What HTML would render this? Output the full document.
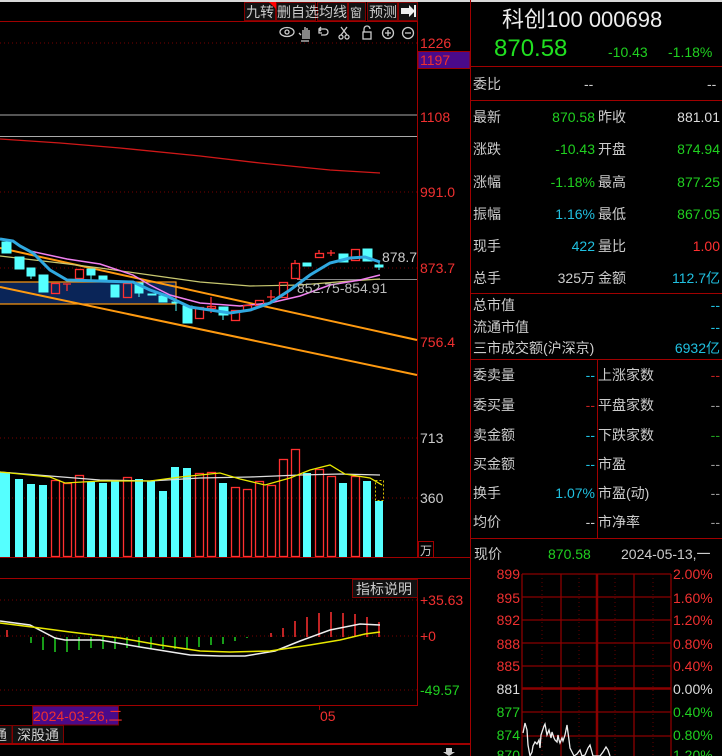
<!DOCTYPE html>
<html><head><meta charset="utf-8"><style>
body{margin:0;background:#000;width:722px;height:756px;overflow:hidden}
svg{display:block}
text{font-family:"Liberation Sans","Noto Sans CJK SC",sans-serif}
</style></head><body>
<svg width="722" height="756" viewBox="0 0 722 756" xmlns="http://www.w3.org/2000/svg">
<rect width="722" height="756" fill="#000"/>
<rect x="0" y="0" width="722" height="2" fill="#d8d8d8"/>
<g stroke="#800000" fill="#111">
<rect x="244.5" y="2.5" width="31" height="18"/><rect x="276.5" y="2.5" width="39" height="18"/><rect x="317.5" y="2.5" width="30" height="18"/><rect x="348.5" y="2.5" width="17" height="18"/><rect x="367.5" y="2.5" width="30" height="18"/><rect x="398.5" y="2.5" width="19" height="18"/>
</g>
<polygon points="269,2 276,2 276,9" fill="#f00"/>
<g fill="#ccc" font-size="14"><text x="246" y="17">九转</text><text x="277" y="17">删自选</text><text x="319" y="17">均线</text><text x="350" y="17" font-size="12">窗</text><text x="369" y="17">预测</text></g>
<path d="M401 8h8v-3l6 6-6 6v-3h-8z" fill="#eee"/><rect x="414" y="5" width="2" height="12" fill="#eee"/>
<line x1="0" y1="21.5" x2="418" y2="21.5" stroke="#a00000"/>
<g stroke="#ccc" fill="none" stroke-width="1.3">
<ellipse cx="287" cy="32" rx="7" ry="4.5"/><circle cx="287" cy="32" r="2"/>
<path d="M303 39v-9m2 9v-12m2 12v-11m2 11v-9m-8 5l-2-2m2 8h8"/>
<path d="M322 29h-3v4h3m-3-4l2-2m-2 2l2 2m1-2h3a3 3 0 010 6h-4"/>
<path d="M341 27l6 8m0-8l-6 8"/><circle cx="341" cy="37" r="2"/><circle cx="347" cy="37" r="2"/>
<rect x="363" y="32" width="8" height="7"/><path d="M364 32v-3a3 3 0 016 0"/>
<circle cx="388" cy="33" r="5.5"/><path d="M385 33h6m-3-3v6"/>
<circle cx="408" cy="33" r="5.5"/><path d="M405 33h6"/>
</g>
<line x1="417.5" y1="21" x2="417.5" y2="558" stroke="#a00000"/>
<g stroke="#700" stroke-dasharray="1 3"><line x1="0" y1="43" x2="417" y2="43"/><line x1="0" y1="192" x2="417" y2="192"/><line x1="0" y1="268" x2="417" y2="268"/><line x1="0" y1="438" x2="417" y2="438"/><line x1="0" y1="498" x2="417" y2="498"/><line x1="0" y1="600" x2="417" y2="600"/><line x1="0" y1="636" x2="417" y2="636"/><line x1="0" y1="690" x2="417" y2="690"/></g>
<g fill="#f03030" font-size="14"><text x="420" y="48">1226</text><text x="420" y="122">1108</text><text x="420" y="197">991.0</text><text x="420" y="273">873.7</text><text x="420" y="347">756.4</text></g>
<rect x="418" y="51.5" width="52" height="17" fill="#4a0a8a" stroke="#a00000"/>
<text x="420" y="65" fill="#f03030" font-size="14">1197</text>
<line x1="0" y1="115" x2="417" y2="115" stroke="#aaa"/>
<line x1="0" y1="136.5" x2="417" y2="136.5" stroke="#aaa"/>
<polyline points="0,139 60,143 120,148 200,156 260,163 330,170 380,173" fill="none" stroke="#d01818" stroke-width="1.3"/>
<rect x="-1" y="282" width="177" height="22" fill="#0a2558" stroke="#ff9a10" stroke-width="1.2"/>
<line x1="0" y1="248" x2="417" y2="340" stroke="#ff9a10" stroke-width="2"/>
<line x1="0" y1="287" x2="417" y2="375" stroke="#ff9a10" stroke-width="2"/>
<line x1="297" y1="279.5" x2="417" y2="279.5" stroke="#888"/>
<polyline points="0,256 60,263 100,268 150,275 200,282 250,286 300,285 350,281 380,279" fill="none" stroke="#c8c870" stroke-width="1.2"/>
<polyline points="30,251 67,259 100,264 133,275 150,285 170,295 200,303 240,306 270,303 300,296 330,285 360,280 380,275" fill="none" stroke="#f080f0" stroke-width="1.5"/>
<g fill="#55ffff" stroke="#55ffff">
<rect x="2" y="242" width="9" height="11"/><rect x="15" y="257" width="9" height="12"/><rect x="27" y="268" width="8" height="8"/><line x1="31" y1="276" x2="31" y2="279"/>
<rect x="39" y="275" width="9" height="17"/><rect x="87" y="269" width="8" height="6"/><line x1="91" y1="275" x2="91" y2="281"/>
<rect x="99" y="276" width="8" height="4"/><rect x="111" y="285" width="8" height="12"/><rect x="135" y="283" width="8" height="10"/><line x1="139" y1="293" x2="139" y2="297"/>
<rect x="148" y="294" width="8" height="1"/><rect x="159" y="296" width="8" height="6"/><rect x="172" y="302" width="8" height="1"/><line x1="176" y1="302" x2="176" y2="311"/>
<rect x="183" y="306" width="9" height="17"/><rect x="219" y="307" width="9" height="8"/><line x1="223" y1="315" x2="223" y2="320"/>
<rect x="303" y="263" width="8" height="3"/><rect x="339" y="254" width="9" height="8"/><rect x="363" y="249" width="9" height="12"/><rect x="375" y="265" width="8" height="2"/><line x1="379" y1="261" x2="379" y2="270"/>
</g>
<g fill="none" stroke="#ff3030" stroke-width="1.3">
<rect x="51.5" y="283.5" width="8" height="10"/><line x1="67" y1="284" x2="67" y2="291"/><line x1="63" y1="284" x2="71" y2="284"/>
<rect x="75.5" y="269.5" width="8" height="9"/><rect x="123.5" y="283.5" width="8" height="14"/>
<rect x="195.5" y="307.5" width="8" height="11"/><line x1="211" y1="297" x2="211" y2="313"/><rect x="207.5" y="306.5" width="8" height="2"/>
<rect x="231.5" y="310.5" width="8" height="10"/><rect x="243.5" y="305.5" width="8" height="5"/><rect x="255.5" y="300.5" width="8" height="5"/>
<line x1="271" y1="290" x2="271" y2="302"/><line x1="267" y1="297" x2="275" y2="297"/>
<rect x="279.5" y="282.5" width="8" height="15"/><rect x="291.5" y="263.5" width="8" height="15"/><line x1="295" y1="260" x2="295" y2="263"/>
<rect x="315.5" y="253.5" width="8" height="4"/><line x1="319" y1="250" x2="319" y2="253"/><line x1="327" y1="253" x2="335" y2="253"/><line x1="331" y1="250" x2="331" y2="256"/>
<rect x="351.5" y="249.5" width="8" height="11"/>
</g>
<polyline points="0,239 13,241 20,246 33,253 50,270 67,280 100,281 133,282 150,290 167,296 175,300 190,307 210,310 230,313 250,310 270,303 290,290 310,275 330,263 350,258 365,257 380,262" fill="none" stroke="#30a8e0" stroke-width="3"/>
<text x="382" y="262" fill="#ccc" font-size="14">878.7</text>
<text x="297" y="293" fill="#bbb" font-size="14">852.75-854.91</text>
<g stroke="#ff3030" fill="none" stroke-width="1.3">
<rect x="51.5" y="480.5" width="8" height="76"/><rect x="63.5" y="483.5" width="8" height="73"/><rect x="75.5" y="475.5" width="8" height="81"/>
<rect x="123.5" y="477.5" width="8" height="79"/><rect x="195.5" y="473.5" width="8" height="83"/><rect x="207.5" y="472.5" width="8" height="84"/>
<rect x="231.5" y="487.5" width="8" height="69"/><rect x="243.5" y="489.5" width="8" height="67"/><rect x="255.5" y="481.5" width="8" height="75"/><rect x="267.5" y="485.5" width="8" height="71"/>
<rect x="279.5" y="459.5" width="8" height="97"/><rect x="291.5" y="449.5" width="8" height="107"/><rect x="315.5" y="469.5" width="8" height="87"/><rect x="327.5" y="476.5" width="8" height="80"/><rect x="351.5" y="476.5" width="8" height="80"/>
</g>
<g fill="#55ffff">
<rect x="0" y="472" width="10" height="85"/><rect x="15" y="479" width="8" height="78"/><rect x="27" y="484" width="8" height="73"/><rect x="39" y="485" width="8" height="72"/>
<rect x="87" y="482" width="8" height="75"/><rect x="99" y="483" width="8" height="74"/><rect x="111" y="481" width="8" height="76"/><rect x="135" y="479" width="8" height="78"/>
<rect x="147" y="481" width="8" height="76"/><rect x="159" y="491" width="8" height="66"/><rect x="171" y="467" width="8" height="90"/><rect x="183" y="468" width="8" height="89"/>
<rect x="219" y="483" width="8" height="74"/><rect x="303" y="473" width="8" height="84"/><rect x="339" y="483" width="8" height="74"/><rect x="363" y="481" width="8" height="76"/><rect x="375" y="501" width="8" height="56"/>
</g>
<rect x="375.5" y="480.5" width="8" height="20" fill="none" stroke="#d8c000" stroke-dasharray="2 2"/>
<polyline points="0,472 50,476 100,480 150,481 200,478 250,477 300,475 340,474 380,475" fill="none" stroke="#ddd" stroke-width="1.3"/>
<polyline points="0,472 50,477 65,483 100,481 150,481 180,477 220,473 240,479 265,485 290,478 310,470 330,465 345,474 370,478 382,485" fill="none" stroke="#e8e800" stroke-width="1.3"/>
<g fill="#ccc" font-size="14"><text x="420" y="443">713</text><text x="420" y="503">360</text></g>
<rect x="418.5" y="541.5" width="15" height="16" fill="none" stroke="#a00000"/><text x="420" y="555" fill="#ccc" font-size="12">万</text>
<line x1="0" y1="557.5" x2="470" y2="557.5" stroke="#a00000"/>
<line x1="0" y1="578.5" x2="470" y2="578.5" stroke="#a00000"/>
<line x1="417.5" y1="578" x2="417.5" y2="706" stroke="#a00000"/>
<line x1="0" y1="705.5" x2="418" y2="705.5" stroke="#a00000"/>
<rect x="352.5" y="579.5" width="65" height="18" fill="#111" stroke="#800000"/>
<text x="356" y="594" fill="#ccc" font-size="14">指标说明</text>
<g font-size="14"><text x="420" y="605" fill="#f03030">+35.63</text><text x="420" y="641" fill="#f03030">+0</text><text x="420" y="695" fill="#20d020">-49.57</text></g>
<g stroke="#20d020" stroke-width="1.5">
<line x1="31" y1="637" x2="31" y2="643"/><line x1="43" y1="637" x2="43" y2="650"/><line x1="55" y1="637" x2="55" y2="652"/><line x1="67" y1="637" x2="67" y2="652"/><line x1="79" y1="637" x2="79" y2="650"/><line x1="91" y1="637" x2="91" y2="648"/><line x1="103" y1="637" x2="103" y2="649"/><line x1="115" y1="637" x2="115" y2="649"/><line x1="127" y1="637" x2="127" y2="648"/><line x1="139" y1="637" x2="139" y2="647"/><line x1="151" y1="637" x2="151" y2="648"/><line x1="163" y1="637" x2="163" y2="649"/><line x1="175" y1="637" x2="175" y2="649"/><line x1="187" y1="637" x2="187" y2="649"/><line x1="199" y1="637" x2="199" y2="647"/><line x1="211" y1="637" x2="211" y2="645"/><line x1="223" y1="637" x2="223" y2="644"/><line x1="235" y1="637" x2="235" y2="641"/><line x1="247" y1="637" x2="247" y2="638"/>
</g>
<g stroke="#ff3030" stroke-width="1.5">
<line x1="7" y1="630" x2="7" y2="637"/><line x1="271" y1="633" x2="271" y2="637"/><line x1="283" y1="628" x2="283" y2="637"/><line x1="295" y1="621" x2="295" y2="637"/><line x1="307" y1="617" x2="307" y2="637"/><line x1="319" y1="613" x2="319" y2="637"/><line x1="331" y1="612" x2="331" y2="637"/><line x1="343" y1="613" x2="343" y2="637"/><line x1="355" y1="614" x2="355" y2="637"/><line x1="367" y1="617" x2="367" y2="637"/><line x1="379" y1="622" x2="379" y2="637"/>
</g>
<polyline points="0,621 30,625 55,638 65,640 100,640 140,647 190,655 220,656 245,656 275,651 300,641 330,630 360,624 380,625" fill="none" stroke="#eee" stroke-width="1.5"/>
<polyline points="0,623 40,628 70,632 120,638 160,645 200,651 230,652 270,651 310,645 340,640 365,634 380,632" fill="none" stroke="#e8e800" stroke-width="1.5"/>
<rect x="32.5" y="706" width="86" height="19" fill="#4a0a8a" stroke="#800000"/>
<text x="33" y="721" fill="#f03030" font-size="14">2024-03-26,二</text>
<line x1="319.5" y1="706" x2="319.5" y2="710" stroke="#a00000"/>
<text x="320" y="721" fill="#f03030" font-size="14">05</text>
<rect x="-1" y="725.5" width="13" height="18" fill="#111" stroke="#800000"/><rect x="12.5" y="725.5" width="51" height="18" fill="#111" stroke="#800000"/>
<text x="-7" y="740" fill="#ccc" font-size="14">通</text><text x="17" y="740" fill="#ccc" font-size="14">深股通</text>
<rect x="0" y="743" width="470" height="2" fill="#a00000"/>
<path d="M446 748h6v4h3l-6 4-6-4h3z" fill="#ccc"/>
<line x1="470.5" y1="0" x2="470.5" y2="756" stroke="#a00000"/>
<text x="502" y="27" fill="#eee" font-size="22">科创100 000698</text>
<text x="494" y="56" fill="#20e020" font-size="24">870.58</text>
<text x="608" y="57" fill="#20d020" font-size="14">-10.43</text><text x="668" y="57" fill="#20d020" font-size="14">-1.18%</text>
<line x1="470" y1="66.5" x2="722" y2="66.5" stroke="#a00000"/>
<text x="473" y="89" fill="#ccc" font-size="14">委比</text><text x="584" y="89" fill="#ccc" font-size="14">--</text><text x="707" y="89" fill="#ccc" font-size="14">--</text>
<line x1="470" y1="100.5" x2="722" y2="100.5" stroke="#a00000"/>
<g font-size="14" fill="#ccc">
<text x="473" y="122">最新</text><text x="598" y="122">昨收</text>
<text x="473" y="154">涨跌</text><text x="598" y="154">开盘</text>
<text x="473" y="187">涨幅</text><text x="598" y="187">最高</text>
<text x="473" y="219">振幅</text><text x="598" y="219">最低</text>
<text x="473" y="251">现手</text><text x="598" y="251">量比</text>
<text x="473" y="283">总手</text><text x="598" y="283">金额</text>
</g>
<g font-size="14" text-anchor="end">
<text x="595" y="122" fill="#20d020">870.58</text><text x="720" y="122" fill="#ddd">881.01</text>
<text x="595" y="154" fill="#20d020">-10.43</text><text x="720" y="154" fill="#20d020">874.94</text>
<text x="595" y="187" fill="#20d020">-1.18%</text><text x="720" y="187" fill="#20d020">877.25</text>
<text x="595" y="219" fill="#20c0e0">1.16%</text><text x="720" y="219" fill="#20d020">867.05</text>
<text x="595" y="251" fill="#20c0e0">422</text><text x="720" y="251" fill="#ff3030">1.00</text>
<text x="595" y="283" fill="#ccc">325万</text><text x="720" y="283" fill="#20c0e0">112.7亿</text>
</g>
<line x1="470" y1="293.5" x2="722" y2="293.5" stroke="#a00000"/>
<g font-size="14" fill="#ccc"><text x="473" y="310">总市值</text><text x="473" y="332">流通市值</text><text x="473" y="353">三市成交额(沪深京)</text></g>
<text x="720" y="310" fill="#20c0e0" font-size="14" text-anchor="end">--</text><text x="720" y="332" fill="#20c0e0" font-size="14" text-anchor="end">--</text><text x="720" y="353" fill="#20c0e0" font-size="14" text-anchor="end">6932亿</text>
<line x1="470" y1="359.5" x2="722" y2="359.5" stroke="#a00000"/>
<line x1="597.5" y1="359" x2="597.5" y2="538" stroke="#a00000"/>
<g font-size="14" fill="#ccc">
<text x="473" y="380">委卖量</text><text x="598" y="380">上涨家数</text>
<text x="473" y="410">委买量</text><text x="598" y="410">平盘家数</text>
<text x="473" y="440">卖金额</text><text x="598" y="440">下跌家数</text>
<text x="473" y="469">买金额</text><text x="598" y="469">市盈</text>
<text x="473" y="498">换手</text><text x="598" y="498">市盈(动)</text>
<text x="473" y="527">均价</text><text x="598" y="527">市净率</text>
</g>
<g font-size="14" text-anchor="end">
<text x="595" y="380" fill="#20c0e0">--</text><text x="720" y="380" fill="#c02020">--</text>
<text x="595" y="410" fill="#c02020">--</text><text x="720" y="410" fill="#999">--</text>
<text x="595" y="440" fill="#20c0e0">--</text><text x="720" y="440" fill="#20a020">--</text>
<text x="595" y="469" fill="#20c0e0">--</text><text x="720" y="469" fill="#999">--</text>
<text x="595" y="498" fill="#20c0e0">1.07%</text><text x="720" y="498" fill="#999">--</text>
<text x="595" y="527" fill="#ccc">--</text><text x="720" y="527" fill="#999">--</text>
</g>
<line x1="470" y1="538.5" x2="722" y2="538.5" stroke="#a00000"/>
<text x="474" y="559" fill="#ccc" font-size="14">现价</text><text x="548" y="559" fill="#20d020" font-size="14">870.58</text><text x="621" y="559" fill="#ccc" font-size="14">2024-05-13,一</text>
<g stroke="#8a0000" stroke-width="1.3">
<line x1="522" y1="574" x2="671" y2="574"/><line x1="522" y1="597" x2="671" y2="597"/><line x1="522" y1="620" x2="671" y2="620"/><line x1="522" y1="643" x2="671" y2="643"/><line x1="522" y1="666" x2="671" y2="666"/><line x1="522" y1="712" x2="671" y2="712"/><line x1="522" y1="736" x2="671" y2="736"/>
<line x1="522" y1="574" x2="522" y2="756"/><line x1="561" y1="574" x2="561" y2="756"/><line x1="634" y1="574" x2="634" y2="756"/><line x1="671" y1="574" x2="671" y2="756"/>
</g>
<line x1="597" y1="574" x2="597" y2="756" stroke="#8a0000" stroke-width="2.5"/>
<line x1="522" y1="688.5" x2="671" y2="688.5" stroke="#8a0000" stroke-width="2.5"/>
<g stroke="#600" stroke-dasharray="1 3"><line x1="542" y1="574" x2="542" y2="756"/><line x1="579" y1="574" x2="579" y2="756"/><line x1="615" y1="574" x2="615" y2="756"/><line x1="653" y1="574" x2="653" y2="756"/></g>
<g font-size="14" text-anchor="end">
<text x="520" y="579" fill="#f03030">899</text><text x="520" y="603" fill="#f03030">895</text><text x="520" y="625" fill="#f03030">892</text><text x="520" y="649" fill="#f03030">888</text><text x="520" y="671" fill="#f03030">885</text><text x="520" y="694" fill="#ddd">881</text><text x="520" y="717" fill="#20d020">877</text><text x="520" y="740" fill="#20d020">874</text><text x="520" y="760" fill="#20d020">870</text>
</g>
<g font-size="14">
<text x="673" y="579" fill="#f03030">2.00%</text><text x="673" y="603" fill="#f03030">1.60%</text><text x="673" y="625" fill="#f03030">1.20%</text><text x="673" y="649" fill="#f03030">0.80%</text><text x="673" y="671" fill="#f03030">0.40%</text><text x="673" y="694" fill="#ddd">0.00%</text><text x="673" y="717" fill="#20d020">0.40%</text><text x="673" y="740" fill="#20d020">0.80%</text><text x="673" y="760" fill="#20d020">1.20%</text>
</g>
<polyline points="523,733 525,723 527,730 528,745 530,756 532,752 533,746 535,742 537,744 539,740 540,748 541,735 542,732 544,726 545,724 547,735 549,730 551,738 552,732 554,738 555,740 557,742 558,735 559,740 560,743 562,738 563,741 565,735 566,730 567,725 569,740 570,748 572,752 574,756 577,754 580,750 582,756 585,755 588,748 590,745 593,756 597,756 600,756 603,752 606,747 608,750 610,756" fill="none" stroke="#eee" stroke-width="1.3"/>
</svg>
</body></html>
